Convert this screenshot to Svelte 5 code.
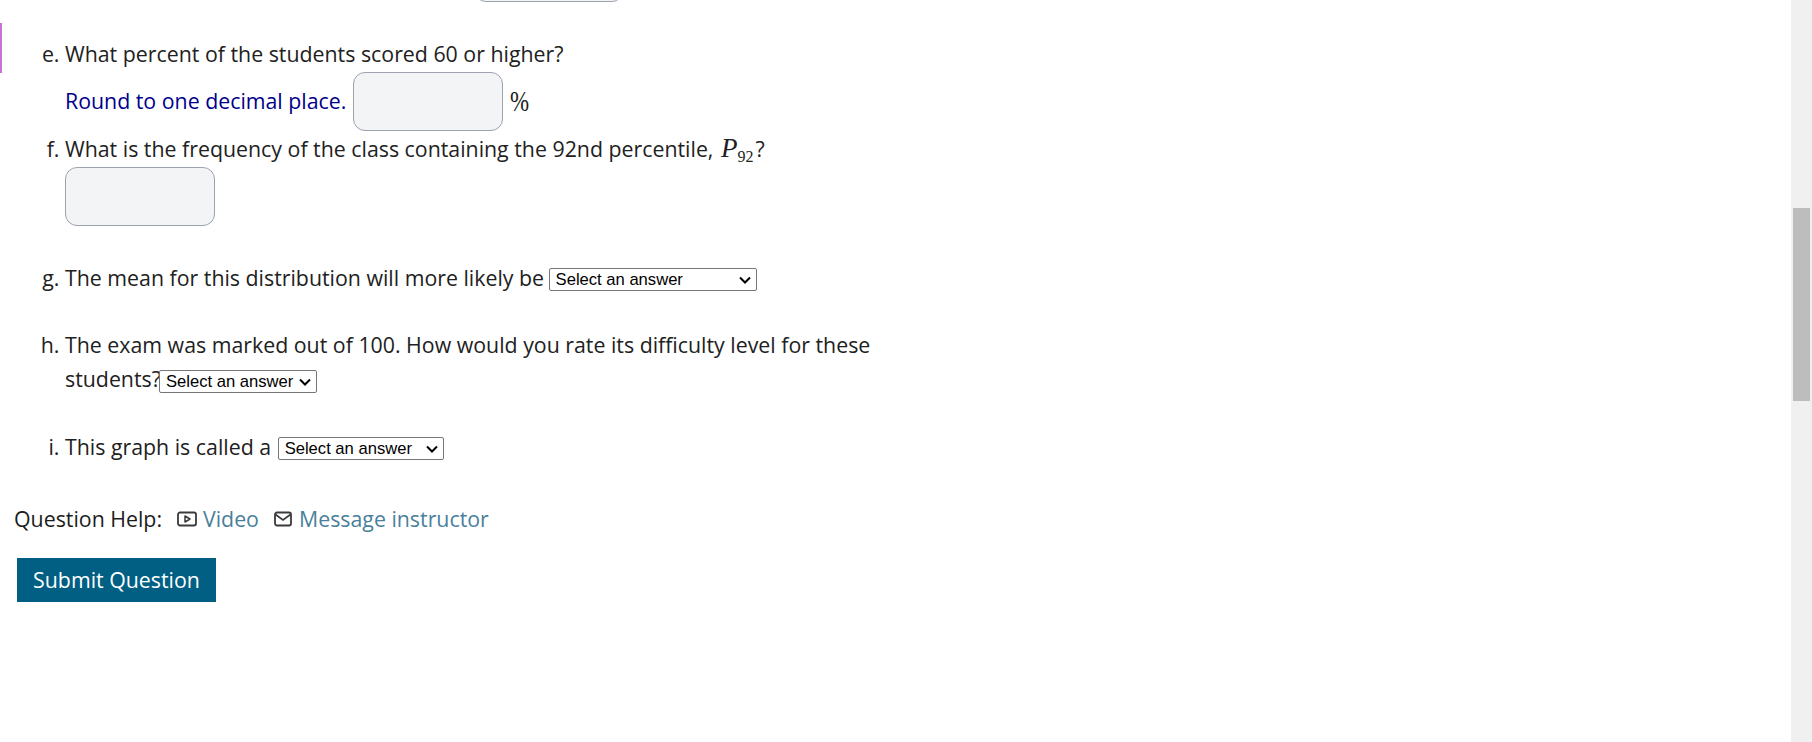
<script>
  const answerOptions = ["Select an answer"];
</script>

<div class="page">
  <main class="content">
    <div class="prev-answer"><input class="answer offset" type="text" aria-label="previous answer" /></div>

    <div class="question">
      <span class="marker-bar"></span>
      <ol class="parts" type="a" start="5">
        <li>
          <div class="line">What percent of the students scored 60 or higher?</div>
          <div class="hint-row">
            <span class="hint">Round to one decimal place.</span>
            <input class="answer" type="text" aria-label="percent" />
            <span class="math pct">%</span>
          </div>
        </li>
        <li class="gap-f">
          <div class="line">What is the frequency of the class containing the 92nd percentile, <span class="math"><i>P</i><sub>92</sub></span>?</div>
          <input class="answer below" type="text" aria-label="frequency" />
        </li>
        <li class="gap-g">
          The mean for this distribution will more likely be
          <select class="sel-g">
            {#each answerOptions as opt}<option>{opt}</option>{/each}
          </select>
        </li>
        <li class="gap-h">
          The exam was marked out of 100. How would you rate its difficulty level for these<br />students?<select class="sel-h">
            {#each answerOptions as opt}<option>{opt}</option>{/each}
          </select>
        </li>
        <li class="gap-i">
          This graph is called a
          <select class="sel-i">
            {#each answerOptions as opt}<option>{opt}</option>{/each}
          </select>
        </li>
      </ol>
    </div>

    <div class="help">
      <span class="help-label">Question Help:</span>
      <svg class="icon video" viewBox="0 0 20 16" width="20" height="16" aria-hidden="true">
        <rect x="1" y="1.5" width="18" height="13" rx="2" fill="none" stroke="#3a3a3a" stroke-width="1.8" />
        <path d="M8 5v6l5-3z" fill="none" stroke="#3a3a3a" stroke-width="1.5" stroke-linejoin="round" />
      </svg>
      <a href="#video" class="link">Video</a>
      <svg class="icon mail" viewBox="0 0 18 16" width="18" height="16" aria-hidden="true">
        <rect x="1" y="1.5" width="16" height="13" rx="2" fill="none" stroke="#3a3a3a" stroke-width="1.8" />
        <path d="M1.5 3.5 9 9l7.5-5.5" fill="none" stroke="#3a3a3a" stroke-width="1.6" />
      </svg>
      <a href="#message" class="link">Message instructor</a>
    </div>

    <button class="submit" type="button">Submit Question</button>
  </main>

  <div class="scrollbar"><div class="thumb"></div></div>
</div>

<style>
  :global(body) {
    margin: 0;
    background: #fff;
  }

  .page {
    display: flex;
    height: 742px;
    overflow: hidden;
    font-family: "Open Sans", "Noto Sans", sans-serif;
    font-size: 21.33px;
    line-height: 34px;
    color: #212121;
  }

  .content {
    flex: 1;
    min-width: 0;
  }

  .prev-answer {
    height: 2px;
    padding-left: 474px;
    display: flex;
    align-items: flex-end;
  }

  .answer {
    box-sizing: border-box;
    display: block;
    width: 150px;
    height: 59px;
    padding: 0;
    background: #f3f4f6;
    border: 1px solid #9ca3af;
    border-radius: 12px;
    flex: none;
  }

  .below {
    margin-top: 1px;
  }

  .question {
    position: relative;
    margin-top: 35px;
  }

  .marker-bar {
    position: absolute;
    left: 0;
    top: -14px;
    width: 2px;
    height: 50px;
    background: #c774d6;
  }

  .parts {
    margin: 0;
    padding: 0 0 0 65px;
  }

  .hint-row {
    display: flex;
    align-items: center;
    gap: 7px;
    margin-top: 1px;
  }

  .hint {
    color: #00008b;
    margin-top: -2px;
  }

  .pct {
    font-size: 29px;
    transform: scaleX(0.79);
    transform-origin: left center;
    margin-top: -2px;
  }

  .math {
    font-family: "Liberation Serif", "DejaVu Serif", serif;
  }

  .line .math {
    margin: 0 2px 0 2px;
    line-height: 0;
  }

  .math i {
    font-size: 27px;
    line-height: 0;
  }

  .math sub {
    font-size: 16px;
    line-height: 0;
  }

  .gap-f {
    margin-top: 1px;
  }

  .gap-g {
    margin-top: 35px;
  }

  .gap-h {
    margin-top: 33px;
  }

  .gap-i {
    margin-top: 34px;
  }

  select {
    appearance: none;
    box-sizing: border-box;
    height: 23px;
    padding: 0 0 0 6px;
    font-family: "Liberation Sans", Arial, sans-serif;
    font-size: 16.6px;
    color: #000;
    border: 1px solid #767676;
    border-radius: 2px;
    background: #fff url("data:image/svg+xml,%3Csvg xmlns='http://www.w3.org/2000/svg' width='12' height='8' viewBox='0 0 12 8'%3E%3Cpath d='M1 1.5l5 5 5-5' fill='none' stroke='%23000' stroke-width='2'/%3E%3C/svg%3E") no-repeat right 5px center;
    vertical-align: 1px;
  }

  .sel-g {
    width: 208px;
    margin-left: -1px;
  }

  .sel-h {
    width: 158px;
    margin-left: -2px;
    vertical-align: 0;
  }

  .sel-i {
    width: 166px;
    margin-left: 1px;
  }

  .help {
    display: flex;
    align-items: center;
    margin: 38px 0 0 14px;
    color: #1c1c1c;
  }

  .help-label {
    margin-right: 15px;
  }

  .icon {
    flex: none;
    margin-right: 6px;
  }

  .mail {
    margin-left: 15px;
    margin-right: 7px;
  }

  .link {
    color: #4a7f9c;
    text-decoration: none;
  }

  .submit {
    display: block;
    margin: 22px 0 0 17px;
    width: 199px;
    height: 44px;
    padding: 0;
    border: 0;
    background: #005f83;
    color: #fff;
    font: inherit;
  }

  .scrollbar {
    flex: none;
    width: 21px;
    background: #f0f0f0;
    padding: 208px 2px 0;
    box-sizing: border-box;
  }

  .thumb {
    height: 193px;
    background: #bdbdbd;
  }
</style>
